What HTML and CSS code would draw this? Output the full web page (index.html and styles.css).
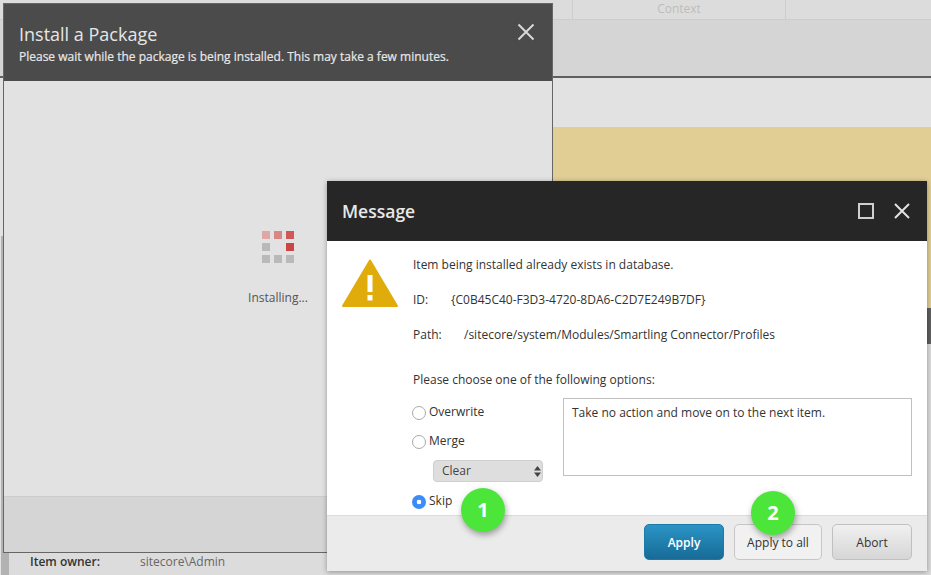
FILE: index.html
```html
<!DOCTYPE html>
<html lang="en">
<head>
<meta charset="utf-8">
<title>Install a Package</title>
<link rel="stylesheet" href="styles.css">
</head>
<body>
<div class="desktop">
  <div class="backdrop">
    <div class="tabs">
      <div class="tab tab-blank"></div>
      <div class="tab tab-context">Context</div>
    </div>
    <div class="ribbon"></div>
    <div class="band"></div>
    <div class="workspace">
      <div class="rail"><div class="rail-fill"></div></div>
      <div class="main">
        <div class="yellow"></div>
        <div class="darkbar"></div>
        <div class="details">
          <div class="owner"><span class="owner-label">Item owner:</span><span class="owner-value">sitecore\Admin</span></div>
        </div>
      </div>
    </div>
  </div>

  <section class="install">
    <header class="install-head">
      <div class="install-titles">
        <h1 class="install-title">Install a Package</h1>
        <p class="install-sub">Please wait while the package is being installed. This may take a few minutes.</p>
      </div>
      <svg class="install-close" width="18" height="18" viewBox="0 0 18 18"><path d="M1.5 1.5 16.5 16.5M16.5 1.5 1.5 16.5" fill="none" stroke="#d8d8d8" stroke-width="2"/></svg>
    </header>
    <div class="install-body">
      <div class="spinner">
        <i class="sq s1"></i><i class="sq s2"></i><i class="sq s3"></i>
        <i class="sq s0"></i><i class="sq s-empty"></i><i class="sq s4"></i>
        <i class="sq s0"></i><i class="sq s0"></i><i class="sq s0"></i>
      </div>
      <div class="installing">Installing...</div>
    </div>
    <div class="install-foot"></div>
  </section>

  <section class="message">
    <header class="msg-head">
      <h2 class="msg-title">Message</h2>
      <div class="msg-icons">
        <svg width="16" height="16" viewBox="0 0 16 16"><rect x="1" y="1" width="14" height="14" fill="none" stroke="#cfcfcf" stroke-width="2"/></svg>
        <svg width="16" height="16" viewBox="0 0 16 16"><path d="M1 1 15 15M15 1 1 15" fill="none" stroke="#e2e2e2" stroke-width="2"/></svg>
      </div>
    </header>
    <div class="msg-body">
      <svg class="warn" width="56" height="48" viewBox="0 0 56 48">
        <path d="M28 1.500 55 47H1Z" fill="#dfac0b" stroke="#dfac0b" stroke-width="2" stroke-linejoin="round"/>
        <rect x="25.5" y="16" width="5" height="17" fill="#fff"/>
        <rect x="25.5" y="36" width="5" height="5.500" fill="#fff"/>
      </svg>
      <div class="msg-content">
        <p class="line">Item being installed already exists in database.</p>
        <p class="line"><span class="key-id">ID:</span>{C0B45C40-F3D3-4720-8DA6-C2D7E249B7DF}</p>
        <p class="line"><span class="key-path">Path:</span>/sitecore/system/Modules/Smartling Connector/Profiles</p>
        <p class="line line-choose">Please choose one of the following options:</p>
        <div class="options">
          <div class="choices">
            <div class="choice"><i class="radio"></i>Overwrite</div>
            <div class="choice"><i class="radio"></i>Merge</div>
            <div class="select">Clear
              <svg class="select-arrows" width="7" height="11" viewBox="0 0 7 11"><path d="M3.500 0 7 4.500H0ZM3.500 11 0 6.500H7Z" fill="#444"/></svg>
            </div>
            <div class="choice choice-skip"><i class="radio radio-on"></i>Skip</div>
          </div>
          <div class="desc">Take no action and move on to the next item.</div>
        </div>
      </div>
    </div>
    <footer class="msg-foot">
      <button class="btn btn-primary">Apply</button>
      <button class="btn btn-light">Apply to all</button>
      <button class="btn btn-grey">Abort</button>
    </footer>
  </section>

  <div class="badge badge-one">1</div>
  <div class="badge badge-two">2</div>
</div>
</body>
</html>
```
FILE: styles.css
```css
* { box-sizing: border-box; }
html, body { margin: 0; padding: 0; }
body {
  width: 931px;
  height: 575px;
  overflow: hidden;
  font-family: "Open Sans", "Liberation Sans", sans-serif;
  font-size: 12px;
  color: #333;
}
h1, h2, p { margin: 0; font-weight: 400; }

.desktop { position: relative; width: 931px; height: 575px; overflow: hidden; background: #e2e2e2; }

/* Backdrop application */
.backdrop { display: flex; flex-direction: column; height: 100%; }
.tabs { display: flex; flex: none; height: 20px; background: #dcdcdc; border-bottom: 1px solid #cdcdcd; }
.tab { height: 19px; border-right: 1px solid #cdcdcd; }
.tab-blank { width: 573px; }
.tab-context { width: 213px; text-align: center; line-height: 17px; color: #bcbcbc; }
.ribbon { flex: none; height: 56px; background: #d5d5d5; }
.band { flex: none; height: 51px; background: #e2e2e2; border-top: 2px solid #5f5f5f; }
.workspace { flex: 1; display: flex; min-height: 0; }
.rail { width: 9px; padding: 109px 0 0 1px; background: #e2e2e2; }
.rail-fill { height: 100%; background: #b2b2b2; }
.main { flex: 1; display: flex; flex-direction: column; }
.yellow { flex: none; height: 181px; background: #e0ce94; }
.darkbar { flex: none; height: 36px; background: #5f5f5f; }
.details { flex: 1; display: flex; align-items: flex-end; background: #dcdcdc; padding: 0 0 3px 21px; }
.owner { display: flex; line-height: 20px; }
.owner-label { width: 110px; font-weight: 600; color: #333; }
.owner-value { color: #666; }

/* Install window */
.install {
  position: absolute;
  left: 3px;
  top: 3px;
  width: 550px;
  height: 550px;
  display: flex;
  flex-direction: column;
  border: 1px solid #666;
  background: #e2e2e2;
}
.install-head {
  flex: none;
  height: 77px;
  background: #4b4b4b;
  display: flex;
  justify-content: space-between;
  padding: 15px 17px 0 15px;
  color: #e6e6e6;
}
.install-title { font-size: 18px; line-height: 30px; }
.install-sub { font-size: 12px; font-weight: 400; line-height: 16px; color: #e8e8e8; -webkit-text-stroke: 0.2px #e8e8e8; }
.install-close { margin-top: 4px; }
.install-body { flex: 1; display: flex; flex-direction: column; align-items: center; padding: 150px 0 0 0; }
.spinner { display: grid; grid-template-columns: repeat(3, 8px); grid-auto-rows: 8px; gap: 4px; }
.sq { display: block; background: #b9b9b9; }
.s1 { background: #dfa6a6; }
.s2 { background: #d98686; }
.s3 { background: #d05858; }
.s4 { background: #cc4545; }
.s-empty { background: transparent; }
.installing { margin-top: 25px; line-height: 20px; color: #555; }
.install-foot { flex: none; height: 56px; background: #d5d5d5; border-top: 1px solid #cccccc; }

/* Message dialog */
.message {
  position: absolute;
  left: 327px;
  top: 181px;
  width: 600px;
  height: 390px;
  display: flex;
  flex-direction: column;
  background: #fff;
  box-shadow: 0 1px 5px rgba(0, 0, 0, .35);
}
.msg-head {
  flex: none;
  height: 60px;
  background: #262626;
  display: flex;
  align-items: center;
  justify-content: space-between;
  padding: 0 17px 0 15px;
}
.msg-title { font-size: 17.5px; font-weight: 600; color: #e8e8e8; }
.msg-icons { display: flex; gap: 20px; }
.msg-icons svg { display: block; }
.msg-body { flex: 1; min-height: 0; display: flex; gap: 15px; padding: 14px 15px 0; }
.warn { margin-top: 4px; flex: none; }
.msg-content { flex: 1; }
.line { line-height: 20px; margin-bottom: 15px; }
.line-choose { margin: 25px 0 8px; }
.key-id { display: inline-block; width: 38px; }
.key-path { display: inline-block; width: 51px; }
.options { display: flex; }
.choices { width: 150px; padding-top: 5px; }
.choice { display: flex; align-items: flex-start; gap: 3px; height: 20px; line-height: 18px; margin: 0 0 9px -1px; color: #333; }
.radio { width: 14px; height: 14px; margin-top: 3px; border-radius: 50%; border: 1px solid #aaa; background: #fff; flex: none; }
.radio-on { border: 0; background: radial-gradient(circle, #fff 0 2px, #3b8df5 2.600px); }
.choice-skip { margin-top: 10px; }
.select {
  position: relative;
  width: 110px;
  height: 22px;
  margin: -1px 0 0 20px;
  padding-left: 8px;
  line-height: 20px;
  border: 1px solid #cfcfcf;
  border-radius: 4px;
  background: #dedede;
  color: #444;
}
.select-arrows { position: absolute; right: 1px; top: 5px; }
.desc { width: 349px; height: 78px; border: 1px solid #c0c0c0; padding: 4px 8px; line-height: 20px; color: #333; }
.msg-foot {
  flex: none;
  height: 56px;
  background: #ebebeb;
  border-top: 1px solid #dcdcdc;
  display: flex;
  justify-content: flex-end;
  gap: 10px;
  padding: 8px 15px 0;
}
.btn {
  height: 36px;
  width: 80px;
  border-radius: 5px;
  font: 12px "Open Sans", "Liberation Sans", sans-serif;
  color: #333;
  padding: 0;
}
.btn-primary { background: linear-gradient(#2a94c6, #176b96); border: 1px solid #1b7aa8; color: #fff; font-weight: 600; }
.btn-light { width: 88px; background: #f1f1f1; border: 1px solid #c6c6c6; }
.btn-grey { background: linear-gradient(#f0f0f0, #d6d6d6); border: 1px solid #c0c0c0; }

/* Annotation badges */
.badge {
  position: absolute;
  width: 44px;
  height: 44px;
  border-radius: 50%;
  background: #4ce63b;
  color: #fff;
  font: 700 20px/44px "Open Sans", "Liberation Sans", sans-serif;
  text-align: center;
  box-shadow: 1px 3px 6px rgba(0, 0, 0, .35);
}
.badge-one { left: 461px; top: 488px; }
.badge-two { left: 751px; top: 491px; }
```
